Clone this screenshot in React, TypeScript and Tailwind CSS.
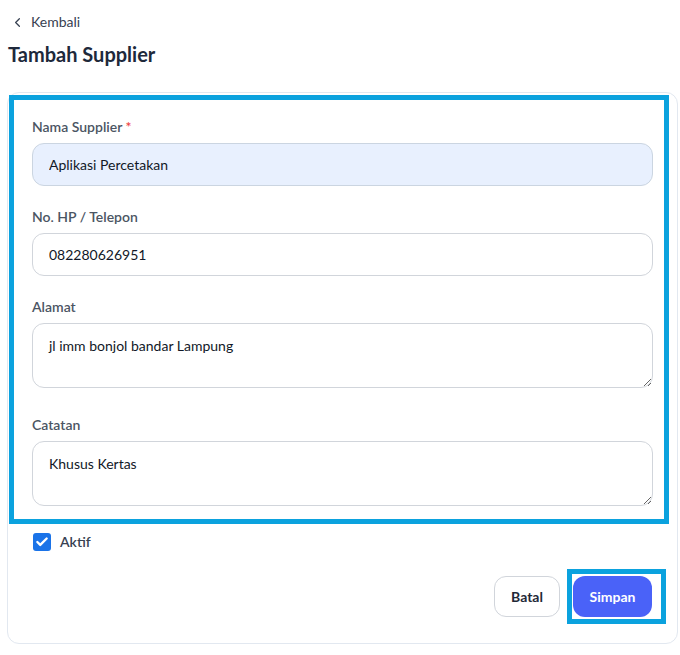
import React, { useState } from 'react';
import { ChevronLeft, Check } from 'lucide-react';

const font = { fontFamily: 'Lato, "Noto Sans", sans-serif' };

export default function App() {
  const [aktif, setAktif] = useState(true);

  return (
    <div className="min-h-[655px] w-[680px] bg-white text-[#1f2937]" style={font}>
      {/* Header */}
      <div className="pt-[12px] pl-[10px] flex items-center gap-[6px] text-sm text-[#374151] h-[20px] box-content">
        <ChevronLeft size={15} strokeWidth={2} />
        <span>Kembali</span>
      </div>
      <h1 className="mt-[8px] pl-[8px] text-[20px] leading-[28px] font-bold text-[#1e293b]">Tambah Supplier</h1>

      {/* Card */}
      <div className="mt-[24px] ml-[7px] w-[671px] rounded-xl border border-[#e2e8f0] pb-[19px]">
        <div className="mt-[2px] ml-[1px] w-[660px] border-[5px] border-[#0ba2de] pl-[18px] pr-[11px] pt-[17px] pb-[13px]">
          <label className="block text-sm leading-5 font-semibold text-[#4b5563]">
            Nama Supplier <span className="text-[#ef4444]">*</span>
          </label>
          <input
            defaultValue="Aplikasi Percetakan"
            className="mt-[6px] block w-full h-[43px] rounded-xl border border-[#cbd5e1] bg-[#e8f0fe] px-[16px] text-sm text-[#111827] outline-none"
          />

          <label className="mt-[21px] block text-sm leading-5 font-semibold text-[#4b5563]">No. HP / Telepon</label>
          <input
            defaultValue="082280626951"
            className="mt-[6px] block w-full h-[43px] rounded-xl border border-[#d1d5db] bg-white px-[16px] text-sm text-[#111827] outline-none"
          />

          <label className="mt-[21px] block text-sm leading-5 font-semibold text-[#4b5563]">Alamat</label>
          <textarea
            defaultValue="jl imm bonjol bandar Lampung"
            className="mt-[6px] block w-full h-[65px] rounded-xl border border-[#d1d5db] bg-white px-[16px] py-[12px] text-sm text-[#111827] outline-none"
          />

          <label className="mt-[27px] block text-sm leading-5 font-semibold text-[#4b5563]">Catatan</label>
          <textarea
            defaultValue="Khusus Kertas"
            className="mt-[6px] block w-full h-[65px] rounded-xl border border-[#d1d5db] bg-white px-[16px] py-[12px] text-sm text-[#111827] outline-none"
          />
        </div>

        <div className="mt-[8px] ml-[25px] flex items-center gap-[9px]">
          <button
            onClick={() => setAktif(!aktif)}
            className={`w-[18px] h-[18px] rounded-[3px] flex items-center justify-center ${aktif ? 'bg-[#1a73e8]' : 'border border-gray-400 bg-white'}`}
          >
            {aktif && <Check size={14} strokeWidth={4} className="text-white" />}
          </button>
          <span className="text-sm font-semibold text-[#374151]">Aktif</span>
        </div>

        <div className="mt-[17px] flex justify-end items-center pr-[11px]">
          <button className="h-[41px] w-[66px] rounded-xl border border-[#d1d5db] bg-white text-sm font-bold text-[#1f2937]">
            Batal
          </button>
          <div className="ml-[7px] border-[5px] border-[#0ba2de] pl-[1px] pr-[9px] py-[2px]">
            <button className="block h-[41px] w-[79px] rounded-xl bg-[#4a62f8] text-sm font-bold text-white">
              Simpan
            </button>
          </div>
        </div>
      </div>
    </div>
  );
}
